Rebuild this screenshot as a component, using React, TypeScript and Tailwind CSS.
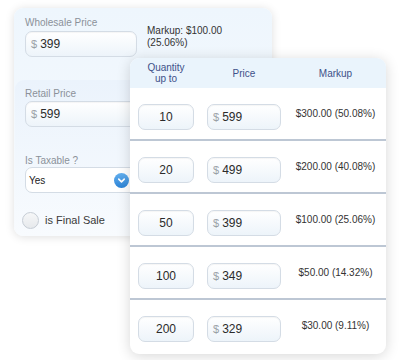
import { ChevronDown } from 'lucide-react';

const tiers = [
  { qty: '10', price: '599', markup: '$300.00 (50.08%)' },
  { qty: '20', price: '499', markup: '$200.00 (40.08%)' },
  { qty: '50', price: '399', markup: '$100.00 (25.06%)' },
  { qty: '100', price: '349', markup: '$50.00 (14.32%)' },
  { qty: '200', price: '329', markup: '$30.00 (9.11%)' },
];

const inputBox =
  'h-[26px] rounded-[7px] border border-[#d4dce5] bg-gradient-to-b from-white to-[#edf4fa] shadow-[inset_0_1px_1px_rgba(0,0,0,0.04)] flex items-center';

function PriceInput({ value, width }: { value: string; width: string }) {
  return (
    <div className={`${inputBox} ${width} pl-[5px]`}>
      <span className="text-[11px] text-[#9a9fa6] mr-[3px]">$</span>
      <span className="text-[12px] text-[#2b2b2b]">{value}</span>
    </div>
  );
}

export default function App() {
  return (
    <div
      className="relative w-[400px] h-[360px] bg-white overflow-hidden"
      style={{ fontFamily: '"Liberation Sans", Arial, sans-serif' }}
    >
      {/* Product pricing card (behind) */}
      <div className="absolute left-[14px] top-[8px] w-[258px] h-[228px] rounded-[9px] bg-gradient-to-b from-[#eef6fd] to-[#f7fafd] shadow-[0_1px_10px_rgba(0,0,0,0.13)] flex flex-col">
        <div className="h-[72px] flex px-[11px] pt-[9px]">
          <div className="flex flex-col w-[112px]">
            <span className="text-[10px] leading-[12px] text-[#8b9199]">Wholesale Price</span>
            <div className="mt-[2px]">
              <PriceInput value="399" width="w-[112px]" />
            </div>
          </div>
          <div className="ml-[10px] self-start mt-[8px] text-[10px] leading-[12px] text-[#333]">
            Markup: $100.00
            <br />
            (25.06%)
          </div>
        </div>

        <div className="flex-1 ml-[1px] rounded-tl-[9px] rounded-bl-[9px] bg-gradient-to-b from-[#ebf3fc] to-[#f8fbfe] flex flex-col px-[10px] pt-[8px]">
          <span className="text-[10px] leading-[12px] text-[#8b9199]">Retail Price</span>
          <div className="mt-[1px]">
            <PriceInput value="599" width="w-[112px]" />
          </div>

          <span className="mt-[28px] text-[10px] leading-[11px] text-[#8b9199]">Is Taxable ?</span>
          <div className="mt-[1px] w-[112px] h-[26px] rounded-[7px] border border-[#d4dce5] bg-white flex items-center justify-between pl-[3px] pr-[7px]">
            <span className="text-[10px] text-[#222]">Yes</span>
            <span className="w-[15px] h-[15px] rounded-full bg-gradient-to-b from-[#63b0ef] to-[#2a83d6] flex items-center justify-center">
              <ChevronDown size={11} strokeWidth={3.5} color="white" />
            </span>
          </div>

          <div className="mt-[19px] -ml-[3px] flex items-center gap-[6px]">
            <span className="w-[17px] h-[17px] rounded-full border border-[#c6cdd5] bg-gradient-to-b from-[#f6f7f8] to-[#e6e9ec]" />
            <span className="text-[11px] text-[#3a3a3a]">is Final Sale</span>
          </div>
        </div>
      </div>

      {/* Quantity price tiers (front) */}
      <div className="absolute left-[130px] top-[58px] w-[256px] h-[296px] rounded-[9px] bg-white shadow-[0_2px_14px_rgba(0,0,0,0.16)] flex flex-col overflow-hidden">
        <div className="h-[30px] bg-[#eaf4fc] flex items-center px-[8px] text-[10px] leading-[11px] text-[#3e5189]">
          <div className="w-[56px] text-center">
            Quantity
            <br />
            up to
          </div>
          <div className="w-[74px] ml-[13px] text-center">Price</div>
          <div className="flex-1 ml-[12px] text-center">Markup</div>
        </div>

        {tiers.map((t, i) => (
          <div
            key={t.qty}
            className={`h-[53px] shrink-0 flex items-start px-[8px] pt-[16px] ${
              i < tiers.length - 1 ? 'border-b-2 border-[#bdc7d4]' : ''
            }`}
          >
            <div className={`${inputBox} w-[56px] justify-center`}>
              <span className="text-[12px] text-[#2b2b2b]">{t.qty}</span>
            </div>
            <div className="ml-[13px]">
              <PriceInput value={t.price} width="w-[74px]" />
            </div>
            <div className="flex-1 ml-[12px] mt-[3px] text-center text-[10px] leading-[14px] text-[#333]">
              {t.markup}
            </div>
          </div>
        ))}
      </div>
    </div>
  );
}
